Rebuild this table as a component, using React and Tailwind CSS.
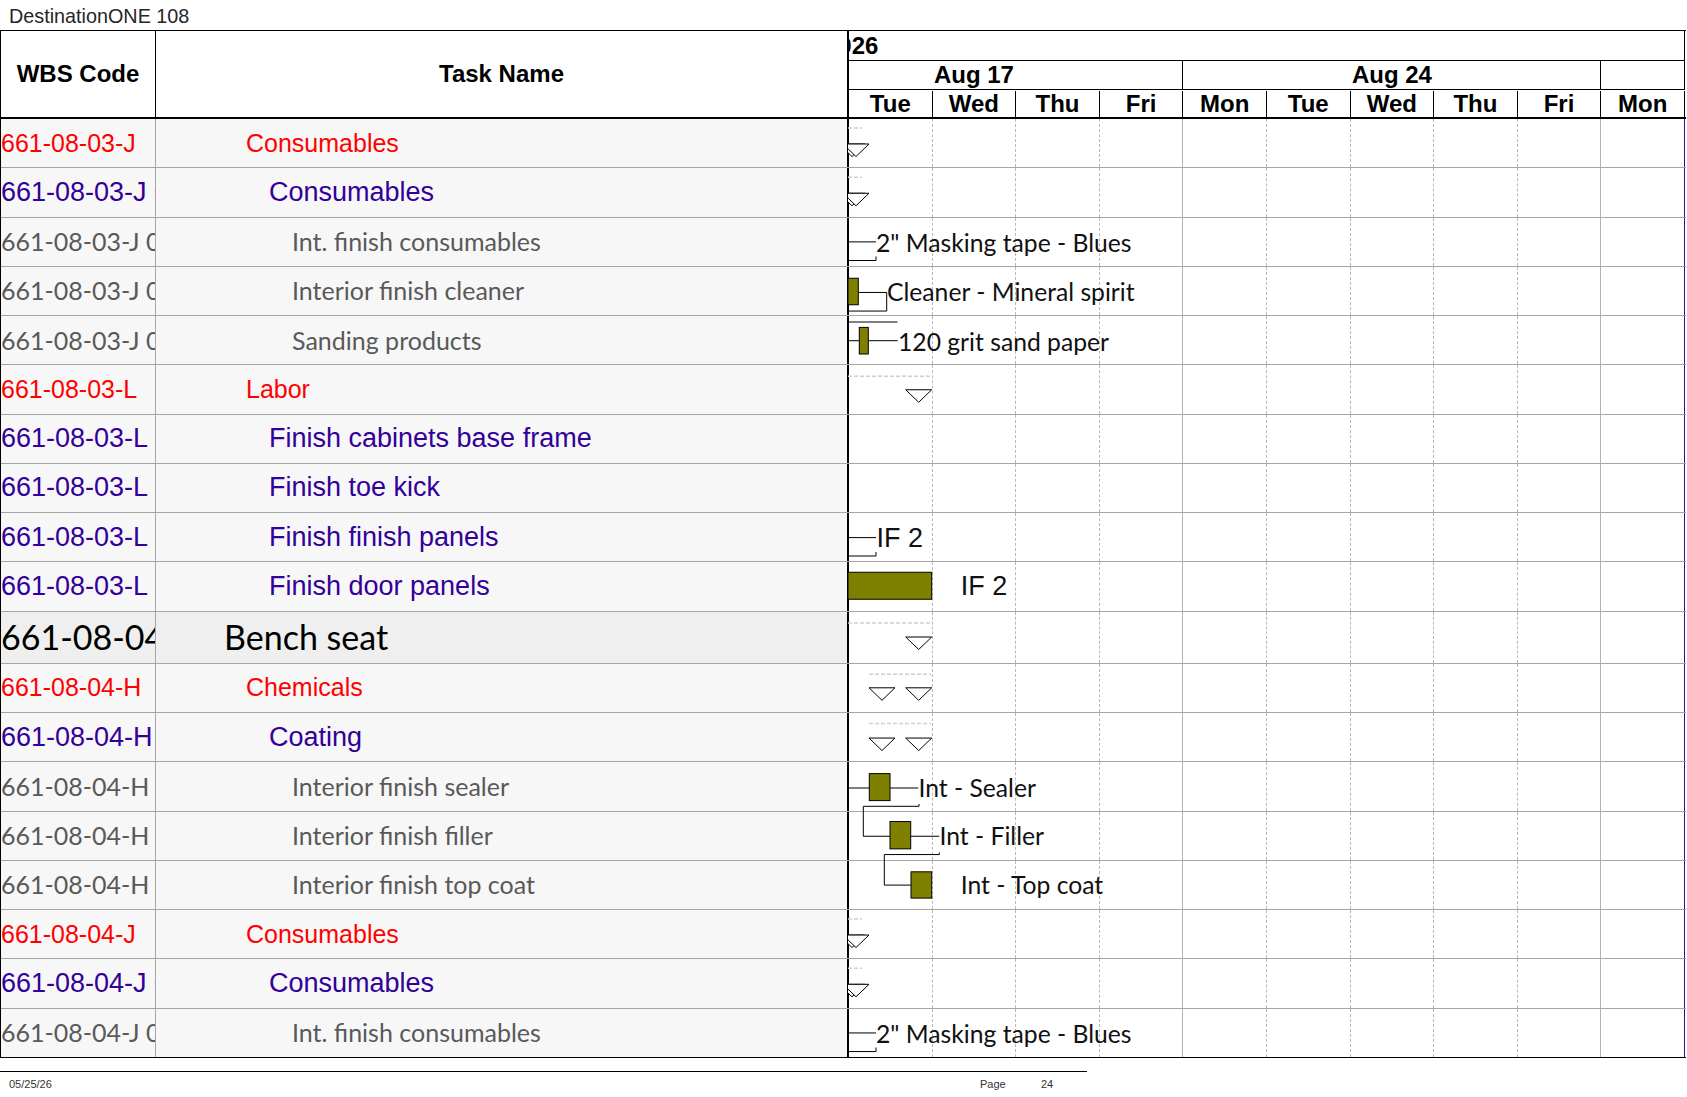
const RH = 49.25;
const BH = 52.3;
const rowTop = (i) => (i <= 10 ? i * RH : 10 * RH + BH + (i - 11) * RH);

const rows = [
  { lvl: 1, wbs: '661-08-03-J', name: 'Consumables' },
  { lvl: 2, wbs: '661-08-03-J 01', name: 'Consumables' },
  { lvl: 3, wbs: '661-08-03-J 01.01', name: 'Int. finish consumables' },
  { lvl: 3, wbs: '661-08-03-J 01.02', name: 'Interior finish cleaner' },
  { lvl: 3, wbs: '661-08-03-J 01.03', name: 'Sanding products' },
  { lvl: 1, wbs: '661-08-03-L', name: 'Labor' },
  { lvl: 2, wbs: '661-08-03-L 01', name: 'Finish cabinets base frame' },
  { lvl: 2, wbs: '661-08-03-L 02', name: 'Finish toe kick' },
  { lvl: 2, wbs: '661-08-03-L 03', name: 'Finish finish panels' },
  { lvl: 2, wbs: '661-08-03-L 04', name: 'Finish door panels' },
  { lvl: 0, wbs: '661-08-04', name: 'Bench seat' },
  { lvl: 1, wbs: '661-08-04-H', name: 'Chemicals' },
  { lvl: 2, wbs: '661-08-04-H 01', name: 'Coating' },
  { lvl: 3, wbs: '661-08-04-H 01.01', name: 'Interior finish sealer' },
  { lvl: 3, wbs: '661-08-04-H 01.02', name: 'Interior finish filler' },
  { lvl: 3, wbs: '661-08-04-H 01.03', name: 'Interior finish top coat' },
  { lvl: 1, wbs: '661-08-04-J', name: 'Consumables' },
  { lvl: 2, wbs: '661-08-04-J 01', name: 'Consumables' },
  { lvl: 3, wbs: '661-08-04-J 01.01', name: 'Int. finish consumables' },
];

const levels = {
  0: { text: "font-['Lato',sans-serif] text-[34px] text-black", pad: 'pl-[68px]', bg: 'bg-[#efefef]', h: 'h-[52.3px]' },
  1: { text: "font-['Liberation_Sans',Arial,sans-serif] text-[25px] text-[#ff0000]", pad: 'pl-[90px]', bg: 'bg-[#f7f7f7]', h: 'h-[49.25px]' },
  2: { text: "font-['Liberation_Sans',Arial,sans-serif] text-[27px] text-[#330099]", pad: 'pl-[113px]', bg: 'bg-[#f7f7f7]', h: 'h-[49.25px]' },
  3: { text: "font-['Lato',sans-serif] text-[25px] text-[#595959]", pad: 'pl-[136px]', bg: 'bg-[#f7f7f7]', h: 'h-[49.25px]' },
};

const days = ['Tue', 'Wed', 'Thu', 'Fri', 'Mon', 'Tue', 'Wed', 'Thu', 'Fri', 'Mon'];

const bodyDay = [
  'border-r border-dashed border-[#b9b9b9]',
  'border-r border-dashed border-[#b9b9b9]',
  'border-r border-dashed border-[#b9b9b9]',
  'border-r border-[#b3b3b3]',
  'border-r border-dashed border-[#b9b9b9]',
  'border-r border-dashed border-[#b9b9b9]',
  'border-r border-dashed border-[#b9b9b9]',
  'border-r border-dashed border-[#b9b9b9]',
  'border-r border-[#b3b3b3]',
  'border-r border-[#1c1c8a]',
];

const CAL = 'Lato, sans-serif';
const ARIAL = "'Liberation Sans', Arial, sans-serif";

function Tri({ x1, x2, y }) {
  return (
    <polygon
      points={`${x1},${y} ${x2},${y} ${(x1 + x2) / 2},${y + 12.5}`}
      fill="white"
      stroke="black"
      strokeWidth="1"
    />
  );
}

function Dash({ x1, x2, y }) {
  return <line x1={x1} x2={x2} y1={y} y2={y} stroke="#cfcfcf" strokeWidth="1.5" strokeDasharray="4 2" />;
}

function Bar({ x, w, y, h }) {
  return <rect x={x} y={y} width={w} height={h} fill="#808000" stroke="black" strokeWidth="1" />;
}

function Label({ x, y, children, font = CAL, size = 24.7 }) {
  return (
    <text x={x} y={y} fontFamily={font} fontSize={size} fill="#111">
      {children}
    </text>
  );
}

// summary rows whose bar starts before the visible range
function SummaryStart({ i }) {
  const t = rowTop(i);
  return (
    <g>
      <Dash x1={0} x2={14} y={t + 9} />
      <Tri x1={-9} x2={17} y={t + 25} />
      <Tri x1={-5} x2={21} y={t + 25} />
    </g>
  );
}

function Masking({ i }) {
  const t = rowTop(i);
  return (
    <g>
      <path d={`M0,${t + 24.4} H28 M0,${t + 43} H28 V${t + 39}`} fill="none" stroke="black" strokeWidth="1" />
      <Label x={28} y={t + 34.4}>2" Masking tape - Blues</Label>
    </g>
  );
}

function GanttDrawing() {
  const t = rowTop;
  return (
    <svg className="absolute left-[847px] top-0 pointer-events-none" width="836" height="939">
      <SummaryStart i={0} />
      <SummaryStart i={1} />
      <Masking i={2} />

      <Bar x={0} w={10.3} y={t(3) + 11.5} h={26.5} />
      <path d={`M10.3,${t(3) + 25.7} H38.7 V${t(3) + 44.3} H0`} fill="none" stroke="black" strokeWidth="1" />
      <Label x={39} y={t(3) + 34}>Cleaner - Mineral spirit</Label>

      <path d={`M0,${t(4) + 6} H49.5 M0,${t(4) + 24.7} H11.3 M20.3,${t(4) + 24.7} H49.7`} fill="none" stroke="black" strokeWidth="1" />
      <Bar x={11.3} w={9} y={t(4) + 11.4} h={26.6} />
      <Label x={50} y={t(4) + 34.7}>120 grit sand paper</Label>

      <Dash x1={0} x2={83.7} y={t(5) + 11} />
      <Tri x1={57.7} x2={83.7} y={t(5) + 24.5} />

      <path d={`M0,${t(8) + 24.6} H28 M0,${t(8) + 43} H28 V${t(8) + 39}`} fill="none" stroke="black" strokeWidth="1" />
      <Label x={28.5} y={t(8) + 34} font={ARIAL} size={27}>IF 2</Label>

      <Bar x={0} w={83.7} y={t(9) + 10} h={27} />
      <Label x={112.7} y={t(9) + 32.7} font={ARIAL} size={27}>IF 2</Label>

      <Dash x1={0} x2={83.7} y={t(10) + 11.5} />
      <Tri x1={57.7} x2={83.7} y={t(10) + 25.5} />

      <Dash x1={21} x2={83} y={t(11) + 10.5} />
      <Tri x1={21} x2={47} y={t(11) + 24} />
      <Tri x1={57.7} x2={83.7} y={t(11) + 24} />

      <Dash x1={21} x2={83} y={t(12) + 10.5} />
      <Tri x1={21} x2={47} y={t(12) + 25} />
      <Tri x1={57.7} x2={83.7} y={t(12) + 25} />

      <path d={`M0,${t(13) + 25.7} H21.3 M42,${t(13) + 25.7} H70.3`} fill="none" stroke="black" strokeWidth="1" />
      <Bar x={21.3} w={20.7} y={t(13) + 11.3} h={27} />
      <Label x={70.5} y={t(13) + 35}>Int - Sealer</Label>
      <path d={`M71,${t(13) + 41.7} V${t(13) + 44} H15.3 V${t(14) + 24.7} H42`} fill="none" stroke="black" strokeWidth="1" />

      <Bar x={42} w={20.7} y={t(14) + 10} h={27.3} />
      <path d={`M62.7,${t(14) + 24.7} H91.3`} fill="none" stroke="black" strokeWidth="1" />
      <Label x={91.5} y={t(14) + 33.3}>Int - Filler</Label>
      <path d={`M91.3,${t(14) + 41} V${t(14) + 43} H36.3 V${t(15) + 24.3} H63`} fill="none" stroke="black" strokeWidth="1" />

      <Bar x={63} w={20.7} y={t(15) + 11} h={26.3} />
      <Label x={112.7} y={t(15) + 33.3}>Int - Top coat</Label>

      <SummaryStart i={16} />
      <SummaryStart i={17} />
      <Masking i={18} />
    </svg>
  );
}

function Row({ row, last }) {
  const s = levels[row.lvl];
  return (
    <div className={`flex ${s.h} border-b ${last ? 'border-black' : 'border-[#a6a6a6]'}`}>
      <div className={`w-[155px] shrink-0 border-r border-[#a6a6a6] ${s.bg} flex items-center overflow-hidden whitespace-nowrap leading-none ${s.text}`}>
        {row.wbs}
      </div>
      <div className={`w-[691px] shrink-0 ${s.bg} flex items-center overflow-hidden whitespace-nowrap leading-none ${s.pad} ${s.text}`}>
        {row.name}
      </div>
      <div className="flex border-l-2 border-black bg-white">
        {bodyDay.map((c, i) => (
          <div key={i} className={`w-[83.6px] shrink-0 h-full ${c}`} />
        ))}
      </div>
    </div>
  );
}

export default function App() {
  return (
    <div className="w-[1687px] h-[1097px] bg-white overflow-hidden font-['Liberation_Sans',Arial,sans-serif] text-black">
      <div className="h-[30px] pl-[9px] pt-[4px] text-[19.8px] leading-[24px] text-[#262626]">DestinationONE 108</div>

      <div className="w-[1686px] border-l border-black">
        {/* header */}
        <div className="flex h-[89px] border-t border-b-2 border-black font-bold text-[24px] leading-none">
          <div className="w-[155px] shrink-0 border-r border-black flex items-center justify-center">WBS Code</div>
          <div className="w-[691px] shrink-0 flex items-center justify-center">Task Name</div>
          <div className="w-[838px] shrink-0 border-l-2 border-black flex flex-col overflow-hidden">
            <div className="h-[30px] shrink-0 border-b border-r border-black flex items-center">
              <span className="ml-[-24px]">2026</span>
            </div>
            <div className="h-[29px] shrink-0 border-b border-black flex">
              <div className="w-[418px] shrink-0 ml-[-83.6px] border-r border-black flex items-center justify-center">Aug 17</div>
              <div className="w-[418px] shrink-0 border-r border-black flex items-center justify-center">Aug 24</div>
              <div className="flex-1 border-r border-black" />
            </div>
            <div className="flex-1 flex pt-[1px]">
              {days.map((d, i) => (
                <div key={i} className="w-[83.6px] shrink-0 flex items-center justify-center border-r border-black">
                  {d}
                </div>
              ))}
            </div>
          </div>
        </div>

        {/* body */}
        <div className="relative">
          {rows.map((r, i) => (
            <Row key={i} row={r} last={i === rows.length - 1} />
          ))}
          <GanttDrawing />
        </div>
      </div>

      <div className="w-[1087px] mt-[13px] border-t border-black flex pt-[6px] text-[11px] leading-[12px] text-[#333]">
        <span className="w-[980px] pl-[9px]">05/25/26</span>
        <span className="w-[61px]">Page</span>
        <span>24</span>
      </div>
    </div>
  );
}
